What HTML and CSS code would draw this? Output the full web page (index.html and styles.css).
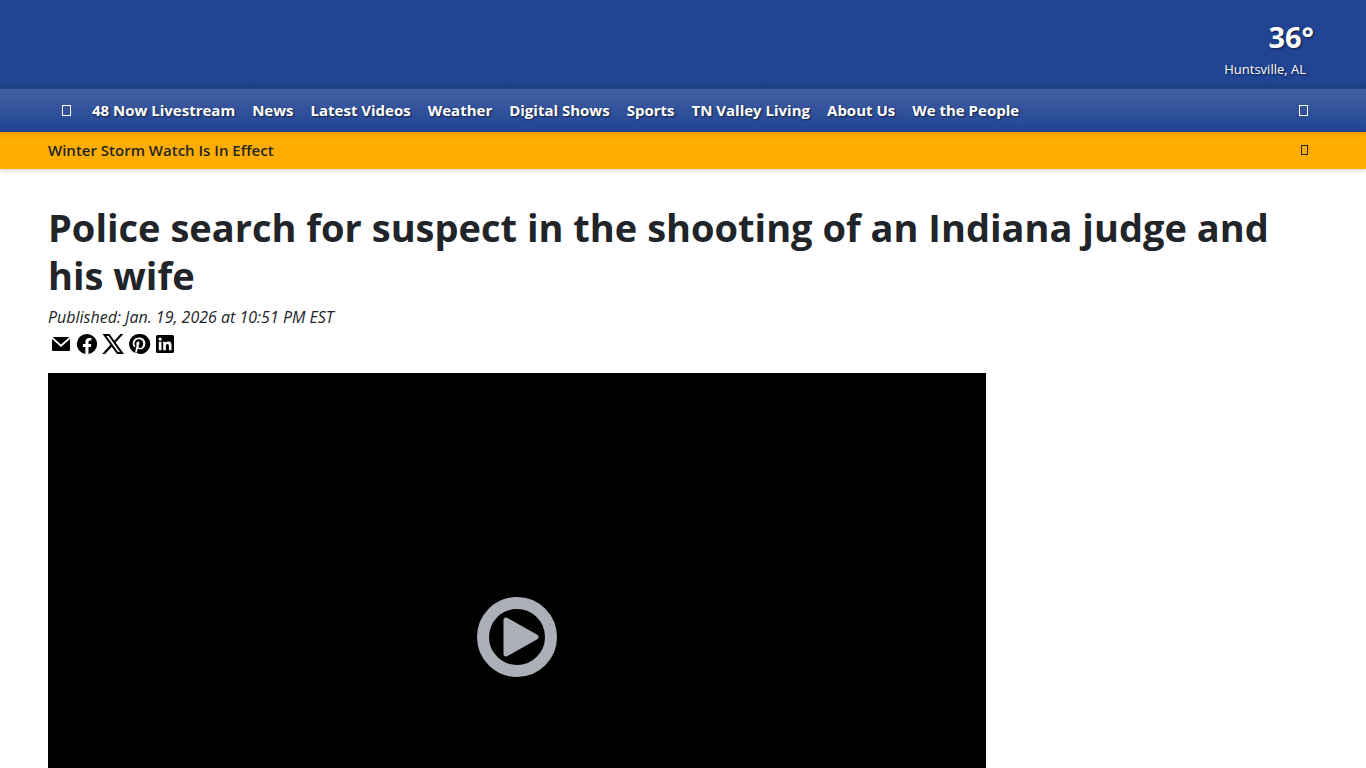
FILE: index.html
```html
<!DOCTYPE html>
<html lang="en">

<head>
    <meta charset="UTF-8">
    <meta name="viewport" content="width=device-width, initial-scale=1.0">
    <title>Police search for suspect in the shooting of an Indiana judge and his wife</title>
    <link rel="stylesheet" href="styles.css">
</head>

<body>
    <header class="masthead">
        <a class="weather" href="#">
            <span class="temp">36°</span>
            <span class="city">Huntsville, AL</span>
        </a>
    </header>

    <nav class="navbar">
        <button class="icon-btn" type="button" aria-label="Menu">
            <svg class="box" viewBox="0 0 9 12"><rect x="0.5" y="0.5" width="8" height="10" /></svg>
        </button>
        <ul class="nav-list">
            <li><a href="#">48 Now Livestream</a></li>
            <li><a href="#">News</a></li>
            <li><a href="#">Latest Videos</a></li>
            <li><a href="#">Weather</a></li>
            <li><a href="#">Digital Shows</a></li>
            <li><a href="#">Sports</a></li>
            <li><a href="#">TN Valley Living</a></li>
            <li><a href="#">About Us</a></li>
            <li><a href="#">We the People</a></li>
        </ul>
        <button class="icon-btn search-btn" type="button" aria-label="Search">
            <svg class="box" viewBox="0 0 9 12"><rect x="0.5" y="0.5" width="8" height="10" /></svg>
        </button>
    </nav>

    <div class="alert-bar">
        <a href="#">Winter Storm Watch Is In Effect</a>
        <button class="icon-btn alert-close" type="button" aria-label="Close">
            <svg class="box box-small" viewBox="0 0 8 10"><rect x="1.5" y="0.5" width="6" height="9" /></svg>
        </button>
    </div>

    <main class="article">
        <h1>Police search for suspect in the shooting of an Indiana judge and his wife</h1>
        <p class="published">Published: Jan. 19, 2026 at 10:51 PM EST</p>

        <div class="share">
            <a href="#" aria-label="Email">
                <svg viewBox="0 0 24 24"><path d="M3.500 5h17L12 12.500z" /><path d="M3 7l9 8 9-8v11a1 1 0 0 1-1 1H4a1 1 0 0 1-1-1z" /></svg>
            </a>
            <a href="#" aria-label="Facebook">
                <svg viewBox="0 0 24 24"><path d="M12 2a10 10 0 0 0-1.600 19.900v-7H7.900V12h2.500V9.800c0-2.500 1.500-3.900 3.800-3.900 1.100 0 2.200.2 2.200.2v2.500h-1.300c-1.200 0-1.600.8-1.600 1.600V12h2.800l-.4 2.900h-2.400v7A10 10 0 0 0 12 2z" /></svg>
            </a>
            <a href="#" aria-label="X">
                <svg viewBox="0 0 24 24"><path fill-rule="evenodd" d="M1.500 2h7l5 6.700L19.400 2h2.900l-7.700 8.500L23 22h-7l-5.300-7.200L4.100 22H1.200l8.200-9.200zM5.500 4L16.900 20h2L7.600 4z" /></svg>
            </a>
            <a href="#" aria-label="Pinterest">
                <svg viewBox="0 0 24 24"><path d="M12 2a10 10 0 0 0-3.600 19.300c-.1-.8-.2-2 0-2.900l1.200-5s-.3-.6-.3-1.500c0-1.400.8-2.400 1.800-2.400.9 0 1.300.6 1.300 1.400 0 .9-.5 2.100-.8 3.300-.2 1 .5 1.800 1.500 1.800 1.800 0 3.100-1.900 3.100-4.600 0-2.400-1.700-4.100-4.200-4.100-2.800 0-4.500 2.100-4.500 4.300 0 .9.300 1.800.7 2.300.1.100.1.200.1.300l-.3 1.100c0 .2-.1.200-.3.100-1.200-.6-2-2.400-2-3.900 0-3.100 2.300-6 6.600-6 3.400 0 6.100 2.400 6.100 5.700 0 3.400-2.100 6.100-5.100 6.100-1 0-1.900-.5-2.300-1.100l-.6 2.300c-.2.900-.8 2-1.200 2.600A10 10 0 1 0 12 2z" /></svg>
            </a>
            <a href="#" aria-label="LinkedIn">
                <svg viewBox="0 0 24 24"><path fill-rule="evenodd" d="M4.500 3h15A1.500 1.500 0 0 1 21 4.500v15a1.500 1.500 0 0 1-1.500 1.500h-15A1.500 1.500 0 0 1 3 19.500v-15A1.500 1.500 0 0 1 4.500 3zM5.800 9.800v8.500h2.700V9.800zM7.100 5.500a1.600 1.600 0 1 0 0 3.200 1.600 1.600 0 0 0 0-3.200zM10.200 9.800v8.500h2.700v-4.200c0-1.200.3-2.200 1.600-2.200s1.400 1.200 1.400 2.300v4.100h2.600v-4.700c0-2.300-.5-4-3.200-4-1.200 0-2.100.7-2.500 1.300V9.800z" /></svg>
            </a>
        </div>

        <div class="columns">
            <div class="player">
                <button class="play" type="button" aria-label="Play video">
                    <svg viewBox="0 0 80 80">
                        <circle cx="40" cy="40" r="34" />
                        <path d="M29 23v34L59 40z" />
                    </svg>
                </button>
            </div>
            <aside class="sidebar"></aside>
        </div>
    </main>
</body>

</html>
```
FILE: styles.css
```css
* {
    box-sizing: border-box;
}

body {
    margin: 0;
    font-family: "Segoe UI", "Open Sans", "Noto Sans", sans-serif;
    font-size: 16px;
    line-height: 24px;
    color: #212529;
    background-color: #fff;
}

a {
    color: inherit;
    text-decoration: none;
}

button {
    padding: 0;
    border: none;
    background: none;
    color: inherit;
    cursor: pointer;
}

svg {
    display: block;
}

/* header */
.masthead {
    display: flex;
    justify-content: flex-end;
    height: 89px;
    padding: 20px 52px 0 48px;
    background: linear-gradient(#214493 80px, #1e4083);
}

.weather {
    display: flex;
    flex-direction: column;
    align-items: flex-end;
    color: #fff;
    text-shadow: 1px 1px 2px rgba(0, 0, 0, 0.6);
}

.temp {
    font-size: 29px;
    font-weight: 700;
    line-height: 34px;
}

.city {
    padding-right: 8px;
    font-size: 13px;
    line-height: 30px;
}

/* navigation */
.navbar {
    display: flex;
    align-items: center;
    height: 43px;
    padding: 0 48px;
    color: #fff;
    background: linear-gradient(#435fa3, #214493);
}

.icon-btn {
    display: flex;
    justify-content: center;
    width: 36px;
}

.box {
    width: 9px;
    height: 12px;
    fill: none;
    stroke: currentColor;
}

.nav-list {
    display: flex;
    flex: 1;
    gap: 1px;
    margin: 0;
    padding: 0 0 2px;
    list-style: none;
}

.nav-list a {
    padding: 0 8px;
    font-size: 15px;
    font-weight: 700;
    white-space: nowrap;
    text-shadow: 1px 1px 2px rgba(0, 0, 0, 0.6);
}

.search-btn {
    width: 29px;
}

/* weather alert */
.alert-bar {
    display: flex;
    align-items: center;
    justify-content: space-between;
    height: 37px;
    padding: 0 48px 1px;
    font-size: 15px;
    font-weight: 600;
    color: #212529;
    background: linear-gradient(#f3a104, #ffae00 7px);
    box-shadow: 0 2px 4px rgba(0, 0, 0, 0.15);
}

.alert-close {
    width: 28px;
}

.box-small {
    width: 8px;
    height: 10px;
}

/* article */
.article {
    padding: 34px 48px 48px;
}

h1 {
    margin: 0;
    font-size: 38px;
    font-weight: 700;
    line-height: 48px;
}

.published {
    margin: 6px 0 3px;
    font-size: 16px;
    font-style: italic;
    line-height: 24px;
}

.share {
    display: flex;
    gap: 2px;
    padding-left: 1px;
}

.share svg {
    width: 24px;
    height: 24px;
    fill: #000;
}

.columns {
    display: grid;
    grid-template-columns: 1fr 300px;
    gap: 32px;
    margin-top: 17px;
}

.player {
    display: flex;
    align-items: center;
    justify-content: center;
    aspect-ratio: 16 / 9;
    background-color: #000;
}

.play svg {
    width: 80px;
    height: 80px;
}

.play circle {
    fill: none;
    stroke: #abb0b8;
    stroke-width: 12;
}

.play path {
    fill: #abb0b8;
    stroke: #abb0b8;
    stroke-width: 5;
    stroke-linejoin: round;
}
```
